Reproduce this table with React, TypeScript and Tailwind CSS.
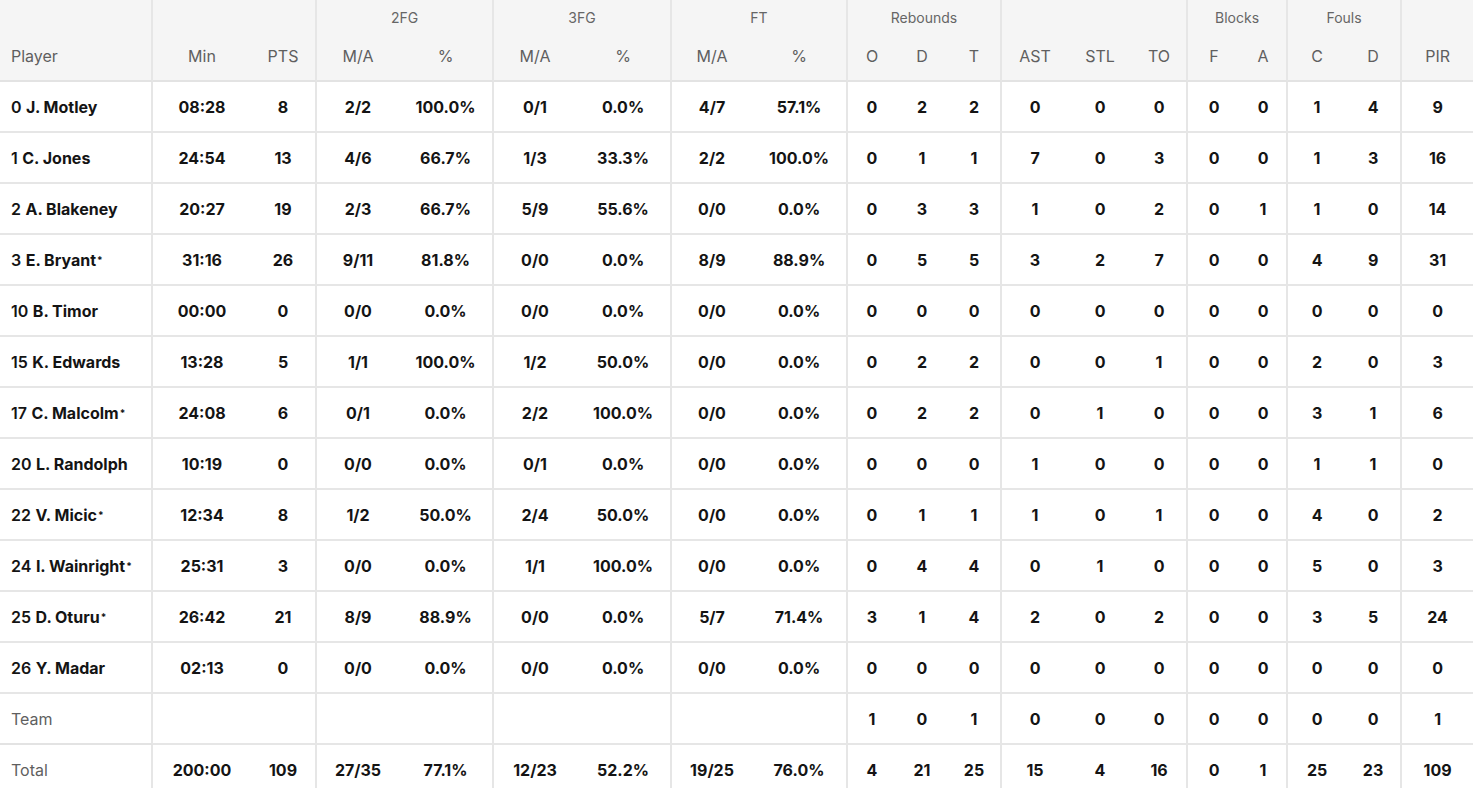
import React from "react";

type Row = { num: string; name: string; starter: boolean; stats: string[] };

const rows: Row[] = [
  { num: "0", name: "J. Motley", starter: false, stats: ["08:28","8","2/2","100.0%","0/1","0.0%","4/7","57.1%","0","2","2","0","0","0","0","0","1","4","9"] },
  { num: "1", name: "C. Jones", starter: false, stats: ["24:54","13","4/6","66.7%","1/3","33.3%","2/2","100.0%","0","1","1","7","0","3","0","0","1","3","16"] },
  { num: "2", name: "A. Blakeney", starter: false, stats: ["20:27","19","2/3","66.7%","5/9","55.6%","0/0","0.0%","0","3","3","1","0","2","0","1","1","0","14"] },
  { num: "3", name: "E. Bryant", starter: true, stats: ["31:16","26","9/11","81.8%","0/0","0.0%","8/9","88.9%","0","5","5","3","2","7","0","0","4","9","31"] },
  { num: "10", name: "B. Timor", starter: false, stats: ["00:00","0","0/0","0.0%","0/0","0.0%","0/0","0.0%","0","0","0","0","0","0","0","0","0","0","0"] },
  { num: "15", name: "K. Edwards", starter: false, stats: ["13:28","5","1/1","100.0%","1/2","50.0%","0/0","0.0%","0","2","2","0","0","1","0","0","2","0","3"] },
  { num: "17", name: "C. Malcolm", starter: true, stats: ["24:08","6","0/1","0.0%","2/2","100.0%","0/0","0.0%","0","2","2","0","1","0","0","0","3","1","6"] },
  { num: "20", name: "L. Randolph", starter: false, stats: ["10:19","0","0/0","0.0%","0/1","0.0%","0/0","0.0%","0","0","0","1","0","0","0","0","1","1","0"] },
  { num: "22", name: "V. Micic", starter: true, stats: ["12:34","8","1/2","50.0%","2/4","50.0%","0/0","0.0%","0","1","1","1","0","1","0","0","4","0","2"] },
  { num: "24", name: "I. Wainright", starter: true, stats: ["25:31","3","0/0","0.0%","1/1","100.0%","0/0","0.0%","0","4","4","0","1","0","0","0","5","0","3"] },
  { num: "25", name: "D. Oturu", starter: true, stats: ["26:42","21","8/9","88.9%","0/0","0.0%","5/7","71.4%","3","1","4","2","0","2","0","0","3","5","24"] },
  { num: "26", name: "Y. Madar", starter: false, stats: ["02:13","0","0/0","0.0%","0/0","0.0%","0/0","0.0%","0","0","0","0","0","0","0","0","0","0","0"] },
];

const team = ["","","","","","","","","1","0","1","0","0","0","0","0","0","0","1"];
const total = ["200:00","109","27/35","77.1%","12/23","52.2%","19/25","76.0%","4","21","25","15","4","16","0","1","25","23","109"];

const widths = [153,98,66,82,95,82,96,80,96,48,52,54,66,64,56,52,48,58,56,71];
const groupEnd = new Set([1,3,5,7,10,13,15,17]);

const subHeaders = ["Min","PTS","M/A","%","M/A","%","M/A","%","O","D","T","AST","STL","TO","F","A","C","D","PIR"];

const font = { fontFamily: 'Inter, "Open Sans", Arial, sans-serif' };

function StatCell({ value, i }: { value: string; i: number }) {
  const br = groupEnd.has(i) ? "border-r-2 border-r-[#e6e6e6]" : "";
  return (
    <td className={`h-[51px] border-b-2 border-b-[#e6e6e6] text-center align-middle font-bold text-[16px] text-[#141414] ${br}`}>
      {value}
    </td>
  );
}

const groupTh = "border-r-2 border-r-[#e6e6e6] text-[14px] font-normal text-[#666] text-center align-middle";

export default function App() {
  return (
    <div className="w-[1473px] bg-white" style={font}>
      <table className="table-fixed border-separate border-spacing-0 w-[1473px]">
        <colgroup>
          {widths.map((w, i) => (
            <col key={i} style={{ width: w }} />
          ))}
        </colgroup>
        <thead>
          <tr className="bg-[#f5f5f5]">
            <th className="h-[35px] border-r-2 border-r-[#e6e6e6]"></th>
            <th colSpan={2} className="border-r-2 border-r-[#e6e6e6]"></th>
            <th colSpan={2} className={groupTh}>2FG</th>
            <th colSpan={2} className={groupTh}>3FG</th>
            <th colSpan={2} className={groupTh}>FT</th>
            <th colSpan={3} className={groupTh}>Rebounds</th>
            <th colSpan={3} className="border-r-2 border-r-[#e6e6e6]"></th>
            <th colSpan={2} className={groupTh}>Blocks</th>
            <th colSpan={2} className={groupTh}>Fouls</th>
            <th></th>
          </tr>
          <tr className="bg-[#f5f5f5]">
            <th className="h-[47px] border-b-2 border-b-[#e3e3e3] border-r-2 border-r-[#e6e6e6] text-left pl-[11px] pb-[4px] text-[16px] font-normal text-[#5f5f5f]">
              Player
            </th>
            {subHeaders.map((h, i) => (
              <th
                key={i}
                className={`border-b-2 border-b-[#e3e3e3] text-center pb-[4px] text-[16px] font-normal text-[#5f5f5f] ${groupEnd.has(i) ? "border-r-2 border-r-[#e6e6e6]" : ""}`}
              >
                {h}
              </th>
            ))}
          </tr>
        </thead>
        <tbody>
          {rows.map((r) => (
            <tr key={r.num}>
              <td className="h-[51px] border-b-2 border-b-[#e6e6e6] border-r-2 border-r-[#e6e6e6] pl-[11px] text-left whitespace-nowrap text-[16px] text-[#141414]">
                <span className="font-semibold">{r.num}</span>{" "}
                <span className="font-bold">{r.name}</span>
                {r.starter && <sup className="font-bold text-[10px] relative top-[-2px] ml-[1px]">*</sup>}
              </td>
              {r.stats.map((s, i) => (
                <StatCell key={i} value={s} i={i} />
              ))}
            </tr>
          ))}
          <tr>
            <td className="h-[51px] border-b-2 border-b-[#e3e3e3] border-r-2 border-r-[#e6e6e6] pl-[11px] text-left text-[16px] text-[#5f5f5f]">
              Team
            </td>
            {team.map((s, i) => (
              <StatCell key={i} value={s} i={i} />
            ))}
          </tr>
          <tr>
            <td className="h-[51px] border-b-2 border-b-[#e6e6e6] border-r-2 border-r-[#e6e6e6] pl-[11px] text-left text-[16px] text-[#5f5f5f]">
              Total
            </td>
            {total.map((s, i) => (
              <StatCell key={i} value={s} i={i} />
            ))}
          </tr>
        </tbody>
      </table>
    </div>
  );
}
